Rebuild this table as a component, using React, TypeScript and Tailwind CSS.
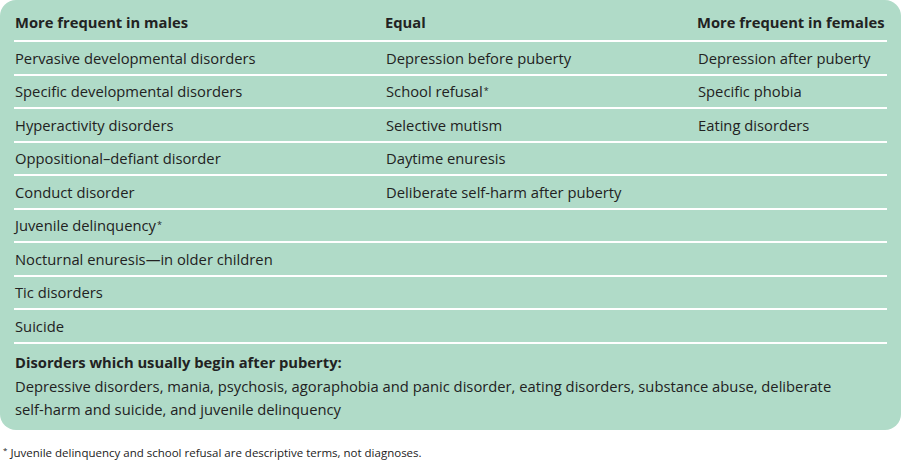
import React from "react";

const col1 = [
  "Pervasive developmental disorders",
  "Specific developmental disorders",
  "Hyperactivity disorders",
  "Oppositional\u2013defiant disorder",
  "Conduct disorder",
  "Juvenile delinquency*",
  "Nocturnal enuresis\u2014in older children",
  "Tic disorders",
  "Suicide",
];
const col2 = [
  "Depression before puberty",
  "School refusal*",
  "Selective mutism",
  "Daytime enuresis",
  "Deliberate self-harm after puberty",
];
const col3 = ["Depression after puberty", "Specific phobia", "Eating disorders"];

function Cell({ text }: { text?: string }) {
  if (!text) return <div />;
  const star = text.endsWith("*");
  const t = star ? text.slice(0, -1) : text;
  return (
    <div className="pl-px whitespace-nowrap">
      {t}
      {star && <sup className="text-[9px] ml-[1px] relative -top-[3px]">*</sup>}
    </div>
  );
}

export default function App() {
  return (
    <div
      className="w-[903px] h-[462px] bg-white text-[#222222]"
      style={{ fontFamily: '"Open Sans", "Noto Sans", sans-serif' }}
    >
      <div className="w-[901px] h-[430px] bg-[#b0dbc8] rounded-[16px] px-[14px] text-[14.75px]">
        <div className="grid grid-cols-[371px_312px_1fr] h-[42px] items-end pb-[7px] border-b-2 border-white font-bold whitespace-nowrap">
          <div className="pl-px">More frequent in males</div>
          <div>Equal</div>
          <div>More frequent in females</div>
        </div>
        {col1.map((c, i) => (
          <div
            key={i}
            className="grid grid-cols-[371px_312px_1fr] h-[33.5px] items-center border-b-2 border-white"
          >
            <Cell text={c} />
            <div>{col2[i] ? <Cell text={col2[i]} /> : null}</div>
            <div>{col3[i] ? <Cell text={col3[i]} /> : null}</div>
          </div>
        ))}
        <div className="pt-[7px] pl-px leading-[23px]">
          <div className="font-bold">Disorders which usually begin after puberty:</div>
          <div className="mt-[1px]">
            Depressive disorders, mania, psychosis, agoraphobia and panic disorder, eating disorders, substance abuse, deliberate
            <br />
            self-harm and suicide, and juvenile delinquency
          </div>
        </div>
      </div>
      <div className="pl-[3px] pt-[15px] text-[11.5px] leading-[16px]">
        <sup className="text-[8px] mr-[3px]">*</sup>Juvenile delinquency and school refusal are descriptive terms, not diagnoses.
      </div>
    </div>
  );
}
